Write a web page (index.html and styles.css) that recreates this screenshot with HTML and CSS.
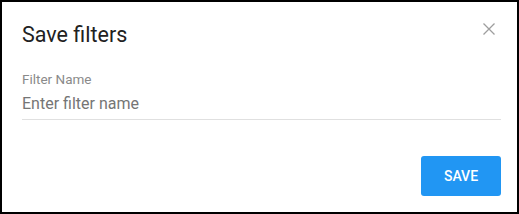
FILE: index.html
```html
<!DOCTYPE html>
<html lang="en">
<head>
    <meta charset="UTF-8">
    <meta name="viewport" content="width=device-width, initial-scale=1.0">
    <title>Save filters</title>
    <link rel="stylesheet" href="styles.css">
</head>
<body>
    <div class="dialog">
        <div class="dialog-header">
            <h2>Save filters</h2>
            <button class="close-btn" aria-label="Close">
                <svg width="12" height="12" viewBox="0 0 12 12">
                    <path d="M0.5 0.5 L11.5 11.5 M11.5 0.5 L0.5 11.5" stroke="#9e9e9e" stroke-width="1.3" fill="none"/>
                </svg>
            </button>
        </div>

        <div class="field">
            <label for="filter-name">Filter Name</label>
            <input type="text" id="filter-name" placeholder="Enter filter name">
        </div>

        <div class="dialog-actions">
            <button class="save-btn">SAVE</button>
        </div>
    </div>
</body>
</html>
```

FILE: styles.css
```css
* {
    box-sizing: border-box;
}
body {
    margin: 0;
    font-family: Roboto, Arial, sans-serif;
    background: #fff;
}
.dialog {
    width: 519px;
    height: 214px;
    border: 2px solid #000;
    padding: 18px 16px 16px 20px;
    display: flex;
    flex-direction: column;
}
.dialog-header {
    display: flex;
    justify-content: space-between;
    align-items: flex-start;
}
.dialog-header h2 {
    margin: 0;
    font-size: 21.5px;
    font-weight: 400;
    color: #212121;
    line-height: 29px;
}
.close-btn {
    background: none;
    border: none;
    padding: 0;
    margin: 3px 6px 0 0;
    cursor: pointer;
    line-height: 0;
}
.field {
    margin-top: 22px;
    display: flex;
    flex-direction: column;
}
.field label {
    font-size: 13.5px;
    color: #8a8a8a;
    line-height: 16px;
}
.field input {
    border: none;
    border-bottom: 1px solid #e0e0e0;
    padding: 7px 0 6px;
    font-family: inherit;
    font-size: 16px;
    line-height: 19px;
    color: #212121;
    outline: none;
}
.field input::placeholder {
    color: #757575;
}
.dialog-actions {
    margin-top: auto;
    display: flex;
    justify-content: flex-end;
}
.save-btn {
    width: 80px;
    height: 40px;
    background-color: #2196f3;
    color: #fff;
    border: none;
    border-radius: 3px;
    font-family: inherit;
    font-size: 14px;
    font-weight: 500;
    cursor: pointer;
}
```
